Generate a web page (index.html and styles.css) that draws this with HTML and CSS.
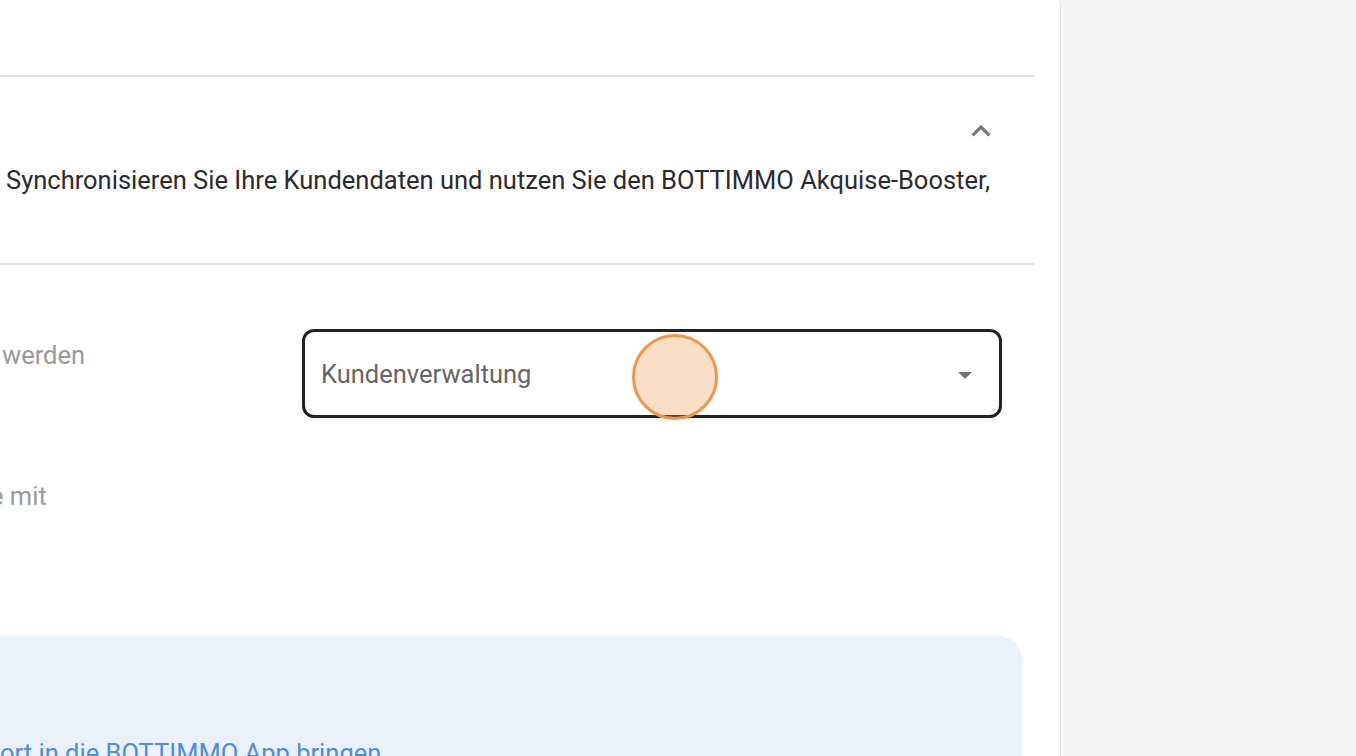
FILE: index.html
```html
<!DOCTYPE html>
<html lang="de">
<head>
    <meta charset="UTF-8">
    <meta name="viewport" content="width=device-width, initial-scale=1.0">
    <title>Kundendaten synchronisieren</title>
    <link rel="stylesheet" href="styles.css">
</head>
<body>
    <div class="page">
        <main class="card">
            <div class="card-top"></div>

            <section class="panel">
                <div class="panel-head">
                    <svg class="chevron" viewBox="0 0 24 24" width="38" height="38"><path d="M12 8l-6 6 1.41 1.41L12 10.83l4.59 4.58L18 14z"/></svg>
                </div>
                <p class="panel-text">Synchronisieren Sie Ihre Kundendaten und nutzen Sie den BOTTIMMO Akquise-Booster,</p>
            </section>

            <section class="settings">
                <div class="row">
                    <div class="label label-first">werden</div>
                    <div class="select">
                        <span class="select-value">Kundenverwaltung</span>
                        <span class="caret"></span>
                    </div>
                </div>
                <div class="row row-second">
                    <div class="label label-second">e mit</div>
                </div>
                <!-- click marker over the select -->
                <div class="click-dot"></div>
            </section>

            <div class="info">
                <div class="info-text">ort in die BOTTIMMO App bringen</div>
            </div>
        </main>
        <aside class="side"></aside>
    </div>
</body>
</html>
```

FILE: styles.css
```css
body {
    margin: 0;
    background-color: #f4f4f4;
    font-family: Roboto, "Noto Sans", Arial, sans-serif;
    overflow: hidden;
}
.page {
    display: flex;
    height: 756px;
    overflow: hidden;
}
.card {
    flex: none;
    width: 1060px;
    margin-top: -14px;
    background-color: #fff;
    border-right: 1px solid #e2e2e2;
    border-top-right-radius: 22px;
    box-shadow: inset 0 16px 4px -14px rgba(0, 0, 0, 0.05);
}
.side {
    flex: 1;
}
.card-top {
    height: 89px;
    margin-right: 25px;
    border-bottom: 2px solid #e2e2e2;
}
.panel {
    margin-right: 25px;
    padding-bottom: 67px;
    border-bottom: 2px solid #e2e2e2;
}
.panel-head {
    display: flex;
    justify-content: flex-end;
    padding: 35px 35px 0 0;
}
.chevron {
    display: block;
    fill: #757575;
}
.panel-text {
    margin: 14px 0 0 6px;
    font-size: 25.5px;
    line-height: 32px;
    color: #2b2b2b;
    white-space: nowrap;
}
.settings {
    position: relative;
    padding-top: 64px;
}
.row {
    display: flex;
    align-items: flex-start;
}
.row-second {
    margin-top: 52px;
}
.label {
    flex: none;
    box-sizing: border-box;
    width: 302px;
    margin-top: 10px;
    white-space: nowrap;
    font-size: 25.5px;
    line-height: 32px;
    color: #9a9a9a;
}
.label-first {
    padding-left: 2px;
}
.label-second {
    margin-left: -10px;
    margin-right: 10px;
}
.select {
    flex: none;
    box-sizing: border-box;
    width: 700px;
    height: 89px;
    border: 3px solid #222;
    border-radius: 12px;
    display: flex;
    align-items: center;
    justify-content: space-between;
    padding: 0 27px 0 16px;
}
.select-value {
    font-size: 25.5px;
    color: #666;
}
.caret {
    width: 0;
    height: 0;
    border-left: 7px solid transparent;
    border-right: 7px solid transparent;
    border-top: 7px solid #757575;
    margin-top: 3px;
}
.click-dot {
    position: absolute;
    left: 632px;
    top: 69px;
    width: 80px;
    height: 80px;
    border: 3px solid #ef9648;
    border-radius: 50%;
    background-color: rgba(240, 150, 72, 0.3);
}
.info {
    margin: 124px 0 0 -30px;
    width: 1052px;
    height: 220px;
    box-sizing: border-box;
    padding: 101px 0 0 30px;
    background-color: #eaf1fb;
    border-radius: 24px;
}
.info-text {
    white-space: nowrap;
    font-size: 25.5px;
    line-height: 32px;
    color: #4f8be0;
}
```
